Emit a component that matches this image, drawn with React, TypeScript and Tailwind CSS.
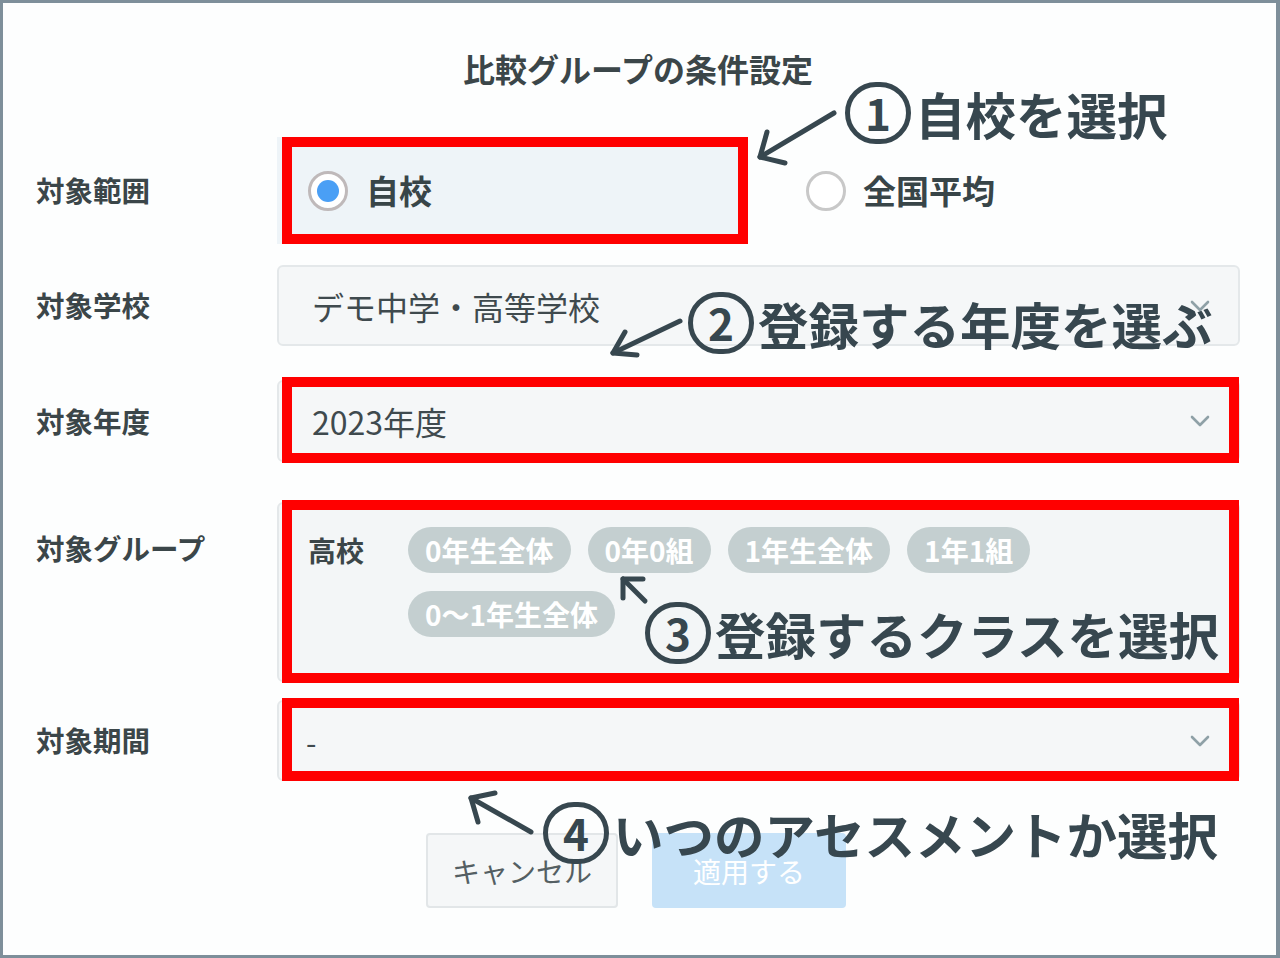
import React from 'react';

const ink = '#37474f';

const Chevron = () => (
  <svg width="20" height="12" viewBox="0 0 20 12" className="shrink-0">
    <polyline points="2,2 10,10 18,2" fill="none" stroke="#8fa1a7" strokeWidth="2.6" strokeLinecap="round" strokeLinejoin="round" />
  </svg>
);

const Label = ({ children }: { children: React.ReactNode }) => (
  <div className="w-[241px] shrink-0 text-[28.5px] font-bold text-[#3b4649] leading-none">{children}</div>
);

const chips = ['0年生全体', '0年0組', '1年生全体', '1年1組', '0〜1年生全体'];

const Note = ({ n, text, left, top }: { n: string; text: string; left: number; top: number }) => (
  <div className="absolute flex items-center gap-[4px] pointer-events-none" style={{ left, top }}>
    <div className="w-[66px] h-[62px] rounded-full border-[5px] border-[#37474f] flex items-center justify-center shrink-0">
      <span className="text-[44px] font-bold leading-none text-[#37474f] -mt-[2px]">{n}</span>
    </div>
    <span className="text-[50.5px] font-bold leading-none text-[#37474f] whitespace-nowrap">{text}</span>
  </div>
);

export default function App() {
  return (
    <div className="relative w-[1280px] h-[958px] overflow-hidden bg-[#7e8f9a] pt-[3px] pl-[3px] pr-[4px] pb-[3px] font-['Noto_Sans_CJK_JP','Noto_Sans',sans-serif]">
      <div className="w-full h-full bg-[#fdfefe] pl-[33px] pr-[36px] pt-[41px]">
        <h1 className="h-[48px] flex items-center justify-center text-[32px] font-bold text-[#3b4649] leading-none">
          比較グループの条件設定
        </h1>

        {/* 対象範囲 */}
        <div className="mt-[45px] flex items-center h-[107px]">
          <Label>対象範囲</Label>
          <div className="flex items-center h-full gap-[27px]">
            <div className="w-[471px] h-full bg-[#eef4f8] flex items-center pl-[31px] gap-[18px]">
              <span className="w-[40px] h-[40px] rounded-full border-[3px] border-[#bfb9ba] bg-white flex items-center justify-center">
                <span className="w-[22px] h-[22px] rounded-full bg-[#4a9ff5]" />
              </span>
              <span className="text-[33px] font-bold text-[#384548] leading-none">自校</span>
            </div>
            <div className="h-full flex items-center pl-[31px] gap-[17px]">
              <span className="w-[40px] h-[40px] rounded-full border-[3px] border-[#c8c8c8] bg-white" />
              <span className="text-[33px] font-bold text-[#384548] leading-none">全国平均</span>
            </div>
          </div>
        </div>

        {/* 対象学校 */}
        <div className="mt-[21px] flex items-center h-[81px]">
          <Label>対象学校</Label>
          <div className="flex-1 h-full rounded-[6px] border-2 border-[#e4e8ea] bg-[#f5f7f8] flex items-center justify-between pl-[33px] pr-[28px]">
            <span className="text-[32px] text-[#3f4a4e] leading-none">デモ中学・高等学校</span>
            <Chevron />
          </div>
        </div>

        {/* 対象年度 */}
        <div className="mt-[34px] flex items-center h-[82px]">
          <Label>対象年度</Label>
          <div className="flex-1 h-full rounded-[6px] border-2 border-[#e4e8ea] bg-[#f5f7f8] flex items-center justify-between pl-[33px] pr-[28px]">
            <span className="text-[32px] text-[#3f4a4e] leading-none">2023年度</span>
            <Chevron />
          </div>
        </div>

        {/* 対象グループ */}
        <div className="mt-[40px] flex items-start h-[180px]">
          <div className="pt-[32px]">
            <Label>対象グループ</Label>
          </div>
          <div className="flex-1 h-full rounded-[6px] border-2 border-[#e4e8ea] bg-[#f3f6f7] flex items-start pl-[29px] pt-[23px]">
            <div className="w-[100px] h-[46px] flex items-center text-[28px] font-bold text-[#3b4649] leading-none">高校</div>
            <div className="flex flex-wrap gap-x-[17px] gap-y-[18px] w-[640px]">
              {chips.map((c) => (
                <span key={c} className="h-[46px] px-[17px] rounded-full bg-[#c4cfd0] text-white text-[28px] font-bold leading-none flex items-center">
                  {c}
                </span>
              ))}
            </div>
          </div>
        </div>

        {/* 対象期間 */}
        <div className="mt-[18px] flex items-center h-[81px]">
          <Label>対象期間</Label>
          <div className="flex-1 h-full rounded-[6px] border-2 border-[#e4e8ea] bg-[#f5f7f8] flex items-center justify-between pl-[27px] pr-[28px]">
            <span className="text-[30px] text-[#3f4a4e] leading-none">-</span>
            <Chevron />
          </div>
        </div>

        {/* buttons */}
        <div className="mt-[52px] flex justify-center gap-[34px] pr-[4px]">
          <button className="w-[192px] h-[75px] rounded-[4px] border-2 border-[#e2e6e8] bg-[#f5f7f8] text-[28px] text-[#545f63]">
            キャンセル
          </button>
          <button className="w-[194px] h-[75px] rounded-[4px] bg-[#c6e2f8] text-[28px] text-white">
            適用する
          </button>
        </div>
      </div>

      {/* red highlight boxes */}
      <div className="absolute left-[282px] top-[137px] w-[466px] h-[107px] border-[10px] border-[#ff0000] pointer-events-none" />
      <div className="absolute left-[282px] top-[377px] w-[957px] h-[86px] border-[10px] border-[#ff0000] pointer-events-none" />
      <div className="absolute left-[282px] top-[500px] w-[957px] h-[183px] border-[10px] border-[#ff0000] pointer-events-none" />
      <div className="absolute left-[282px] top-[698px] w-[957px] h-[83px] border-[10px] border-[#ff0000] pointer-events-none" />

      {/* arrows */}
      <svg className="absolute left-0 top-0 pointer-events-none" width="1280" height="958" viewBox="0 0 1280 958">
        <g fill="none" stroke={ink} strokeWidth="5" strokeLinecap="round" strokeLinejoin="round">
          <line x1="834" y1="113" x2="760" y2="157" />
          <polyline points="767,132 760,157 785,163" />
          <line x1="680" y1="321" x2="613" y2="353" />
          <polyline points="625,332 613,353 637,355" />
          <line x1="645" y1="601" x2="623" y2="579" />
          <polyline points="623,598 623,579 643,579" />
          <line x1="531" y1="832" x2="471" y2="798" />
          <polyline points="478,822 471,798 495,793" />
        </g>
      </svg>

      {/* annotations */}
      <Note n="1" text="自校を選択" left={845} top={82} />
      <Note n="2" text="登録する年度を選ぶ" left={688} top={292} />
      <Note n="3" text="登録するクラスを選択" left={645} top={602} />
      <Note n="4" text="いつのアセスメントか選択" left={543} top={802} />
    </div>
  );
}
